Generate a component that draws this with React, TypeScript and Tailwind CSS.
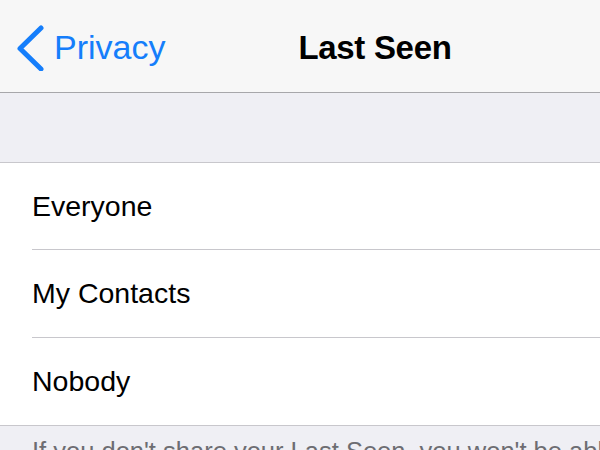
import React from "react";

const options = ["Everyone", "My Contacts", "Nobody"];

export default function App() {
  return (
    <div
      className="w-[600px] h-[450px] overflow-hidden bg-[#efeff4] select-none"
      style={{ fontFamily: '"Liberation Sans", Arial, sans-serif' }}
    >
      <div className="w-[750px]">
        {/* nav bar */}
        <div className="h-[93px] bg-[#f7f7f7] border-b border-[#a7a7aa] grid grid-cols-[1fr_auto_1fr] items-center">
          <div className="flex items-center">
            <svg width="30" height="46" viewBox="0 0 30 46" className="ml-[15px] mt-[3px] shrink-0">
              <polyline
                points="26,3 5,23.5 26,44"
                fill="none"
                stroke="#157efb"
                strokeWidth="5"
                strokeLinecap="round"
                strokeLinejoin="round"
              />
            </svg>
            <span className="ml-[9px] text-[34px] leading-none text-[#157efb] mt-[2px]">Privacy</span>
          </div>
          <span className="text-[33px] leading-none font-bold text-black tracking-[-0.3px] mt-[2px]">Last Seen</span>
          <div />
        </div>

        {/* spacer */}
        <div className="h-[69px]" />

        {/* options */}
        <div className="bg-white border-t border-b border-[#c8c7cc]">
          {options.map((o, i) => (
            <div key={o} className="pl-[32px]">
              <div
                className={`flex items-center text-[28.5px] text-black ${
                  i === 1 ? "h-[88px]" : "h-[87px]"
                } ${i < options.length - 1 ? "border-b border-[#c8c7cc]" : ""}`}
              >
                {o}
              </div>
            </div>
          ))}
        </div>

        {/* footer */}
        <div className="pt-[10px] pl-[32px] pr-[30px] text-[25.5px] leading-[30px] text-[#6d6d72]">
          If you don't share your Last Seen, you won't be able to see other people's Last Seen
        </div>
      </div>
    </div>
  );
}
